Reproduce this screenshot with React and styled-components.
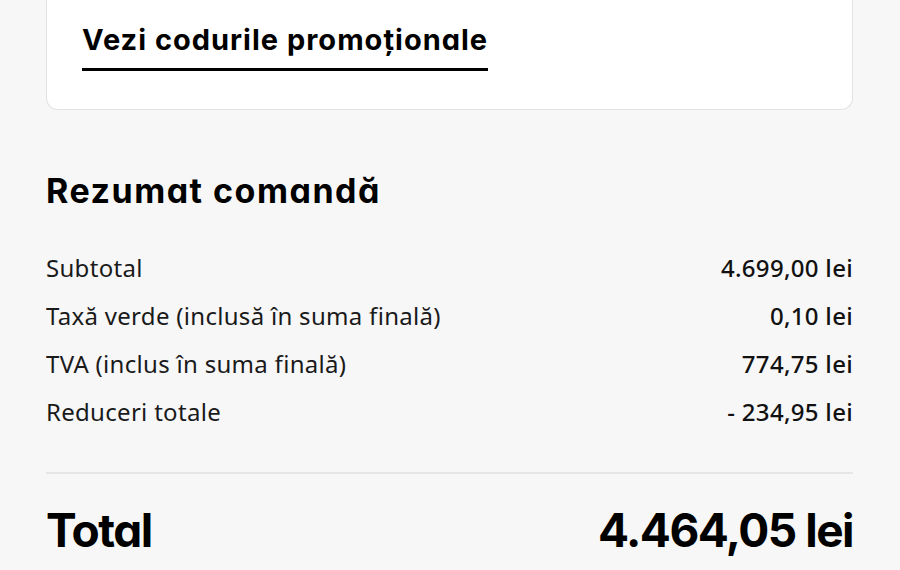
import React from "react"
import styled, { createGlobalStyle } from "styled-components"

const GlobalStyle = createGlobalStyle`
  html, body {
    margin: 0;
    padding: 0;
    background: #f7f7f7;
  }
`

const rows = [
  { label: "Subtotal", value: "4.699,00 lei" },
  { label: "Taxă verde (inclusă în suma finală)", value: "0,10 lei" },
  { label: "TVA (inclus în suma finală)", value: "774,75 lei" },
  { label: "Reduceri totale", value: "- 234,95 lei" },
]

const SummaryRow = ({ label, value }) => {
  return (
    <Row>
      <RowLabel>{label}</RowLabel>
      <RowValue>{value}</RowValue>
    </Row>
  )
}

const App = () => {
  return (
    <Page>
      <GlobalStyle />
      <PromoCard>
        <PromoLink href="#">Vezi codurile promoționale</PromoLink>
      </PromoCard>
      <Summary>
        <Title>Rezumat comandă</Title>
        <Rows>
          {rows.map((r) => (
            <SummaryRow key={r.label} label={r.label} value={r.value} />
          ))}
        </Rows>
        <Divider />
        <TotalRow>
          <TotalText>Total</TotalText>
          <TotalText>4.464,05 lei</TotalText>
        </TotalRow>
      </Summary>
    </Page>
  )
}

const Page = styled.div`
  width: 900px;
  height: 570px;
  overflow: hidden;
  box-sizing: border-box;
  padding: 0 47px 0 46px;
  background: #f7f7f7;
`

const PromoCard = styled.div`
  background: #fff;
  border: 1px solid #e2e2e2;
  border-top: none;
  border-radius: 0 0 12px 12px;
  padding: 22px 35px 38px;
  display: flex;
  align-items: flex-start;
`

const PromoLink = styled.a`
  font-family: Inter, "Liberation Sans", sans-serif;
  font-feature-settings: "cv11";
  font-weight: 700;
  font-size: 29px;
  line-height: 35px;
  letter-spacing: 1px;
  color: #000;
  text-decoration: none;
  padding-bottom: 11px;
  border-bottom: 3px solid #000;
`

const Summary = styled.div`
  display: flex;
  flex-direction: column;
  padding-top: 61px;
`

const Title = styled.h2`
  margin: 0;
  font-family: Inter, "Liberation Sans", sans-serif;
  font-feature-settings: "cv11";
  font-weight: 700;
  font-size: 34px;
  line-height: 40px;
  letter-spacing: 1.5px;
  color: #000;
`

const Rows = styled.div`
  display: flex;
  flex-direction: column;
  margin-top: 33px;
`

const Row = styled.div`
  display: flex;
  justify-content: space-between;
  align-items: baseline;
  height: 48px;
  line-height: 48px;
  font-family: "Noto Sans", "Open Sans", sans-serif;
  font-size: 24px;
  color: #1a1a1a;
`

const RowLabel = styled.span`
  font-weight: 400;
  letter-spacing: 0.3px;
`

const RowValue = styled.span`
  font-weight: 500;
  letter-spacing: 0.3px;
  color: #111;
`

const Divider = styled.hr`
  margin: 36px 0 0;
  border: none;
  height: 2px;
  background: #e6e6e6;
`

const TotalRow = styled.div`
  display: flex;
  justify-content: space-between;
  align-items: baseline;
  margin-top: 26px;
`

const TotalText = styled.span`
  font-family: Inter, "Liberation Sans", sans-serif;
  font-feature-settings: "cv11";
  font-weight: 700;
  font-size: 46px;
  line-height: 60px;
  letter-spacing: -1.5px;
  color: #000;
`

export default App
